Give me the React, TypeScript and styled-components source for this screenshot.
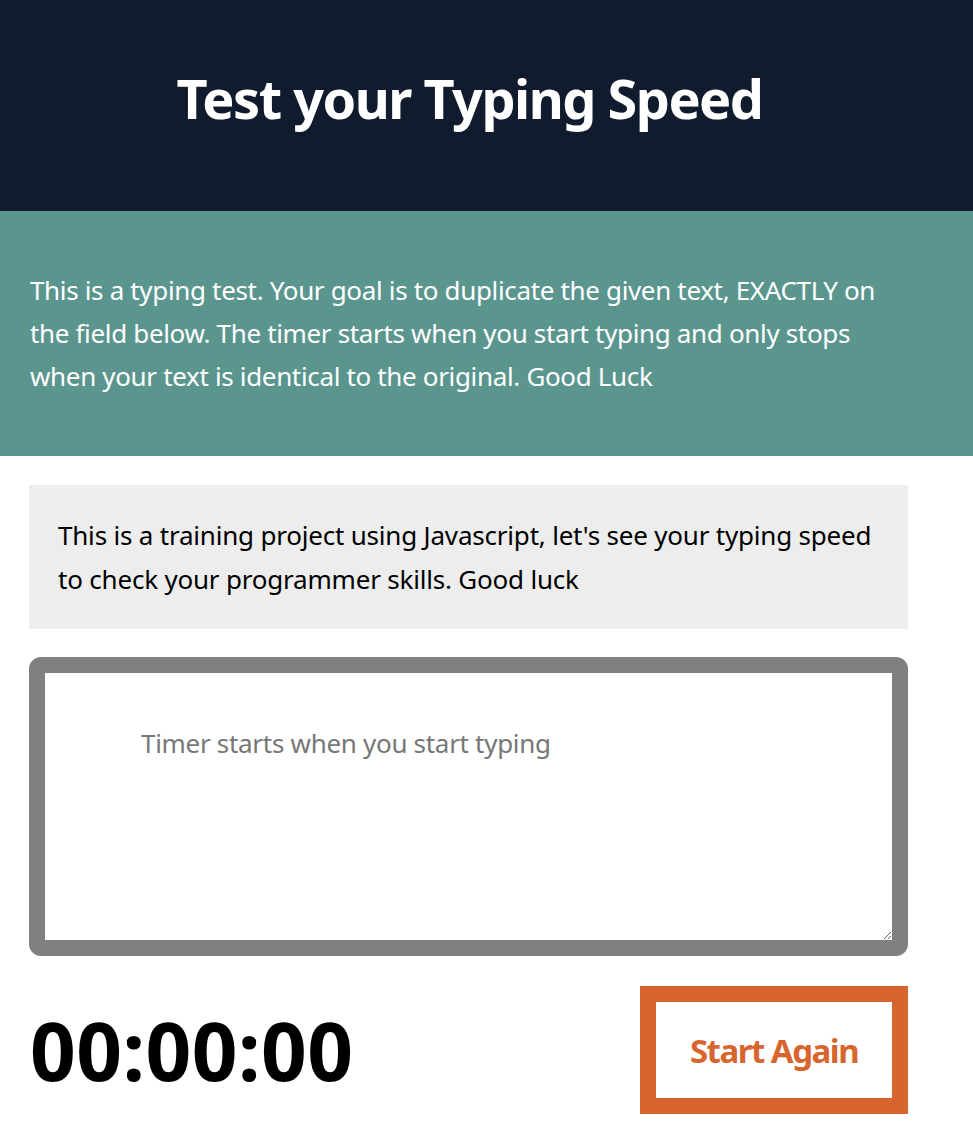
import React from "react";
import styled, { createGlobalStyle } from "styled-components";

const Global = createGlobalStyle`
  html, body { margin: 0; padding: 0; background: #ffffff; }
  body { font-family: "Noto Sans", "Open Sans", sans-serif; }
  * { box-sizing: border-box; }
`;

const Header = styled.header`
  height: 211px;
  background: #111b2e;
  display: flex;
  align-items: center;
  justify-content: center;
  padding: 0 34px 16px 0;
`;

const Title = styled.h1`
  margin: 0;
  color: #ffffff;
  font-size: 54px;
  font-weight: 700;
  letter-spacing: -1.5px;
`;

const Intro = styled.section`
  height: 245px;
  background: #5b968e;
  color: #ffffff;
  padding: 58px 30px 0;
`;

const IntroText = styled.p`
  margin: 0;
  font-size: 26px;
  line-height: 43px;
  letter-spacing: -0.34px;
  white-space: nowrap;
`;

const Main = styled.main`
  padding: 29px 65px 28px 29px;
  display: flex;
  flex-direction: column;
  gap: 28px;
`;

const Original = styled.div`
  background: #ededed;
  height: 144px;
  padding: 28px 29px 0;
  font-size: 26px;
  line-height: 44px;
  letter-spacing: -0.2px;
  white-space: nowrap;
  color: #000;
`;

const Typing = styled.textarea`
  display: block;
  width: 100%;
  height: 299px;
  border: 16px solid #808080;
  border-radius: 12px;
  padding: 50px 96px;
  font-family: inherit;
  font-size: 26px;
  line-height: 40px;
  letter-spacing: -0.3px;
  color: #000;
  outline: none;
  resize: vertical;
  &::placeholder { color: #777777; }
`;

const Footer = styled.div`
  display: flex;
  align-items: center;
  justify-content: space-between;
  padding-top: 2px;
`;

const Timer = styled.div`
  font-size: 80px;
  font-weight: 700;
  color: #000;
  line-height: 1;
  letter-spacing: 0.5px;
  padding-left: 1px;
`;

const Button = styled.button`
  width: 268px;
  height: 128px;
  background: #ffffff;
  border: 16px solid #d9652e;
  color: #d9652e;
  font-family: inherit;
  font-size: 33px;
  font-weight: 700;
  letter-spacing: -1.5px;
  cursor: pointer;
`;

export default function App() {
  return (
    <>
      <Global />
      <Header>
        <Title>Test your Typing Speed</Title>
      </Header>
      <Intro>
        <IntroText>
          This is a typing test. Your goal is to duplicate the given text, EXACTLY on
          <br />
          the field below. The timer starts when you start typing and only stops
          <br />
          when your text is identical to the original. Good Luck
        </IntroText>
      </Intro>
      <Main>
        <Original>
          This is a training project using Javascript, let's see your typing speed
          <br />
          to check your programmer skills. Good luck
        </Original>
        <Typing placeholder="Timer starts when you start typing" />
        <Footer>
          <Timer>00:00:00</Timer>
          <Button>Start Again</Button>
        </Footer>
      </Main>
    </>
  );
}
